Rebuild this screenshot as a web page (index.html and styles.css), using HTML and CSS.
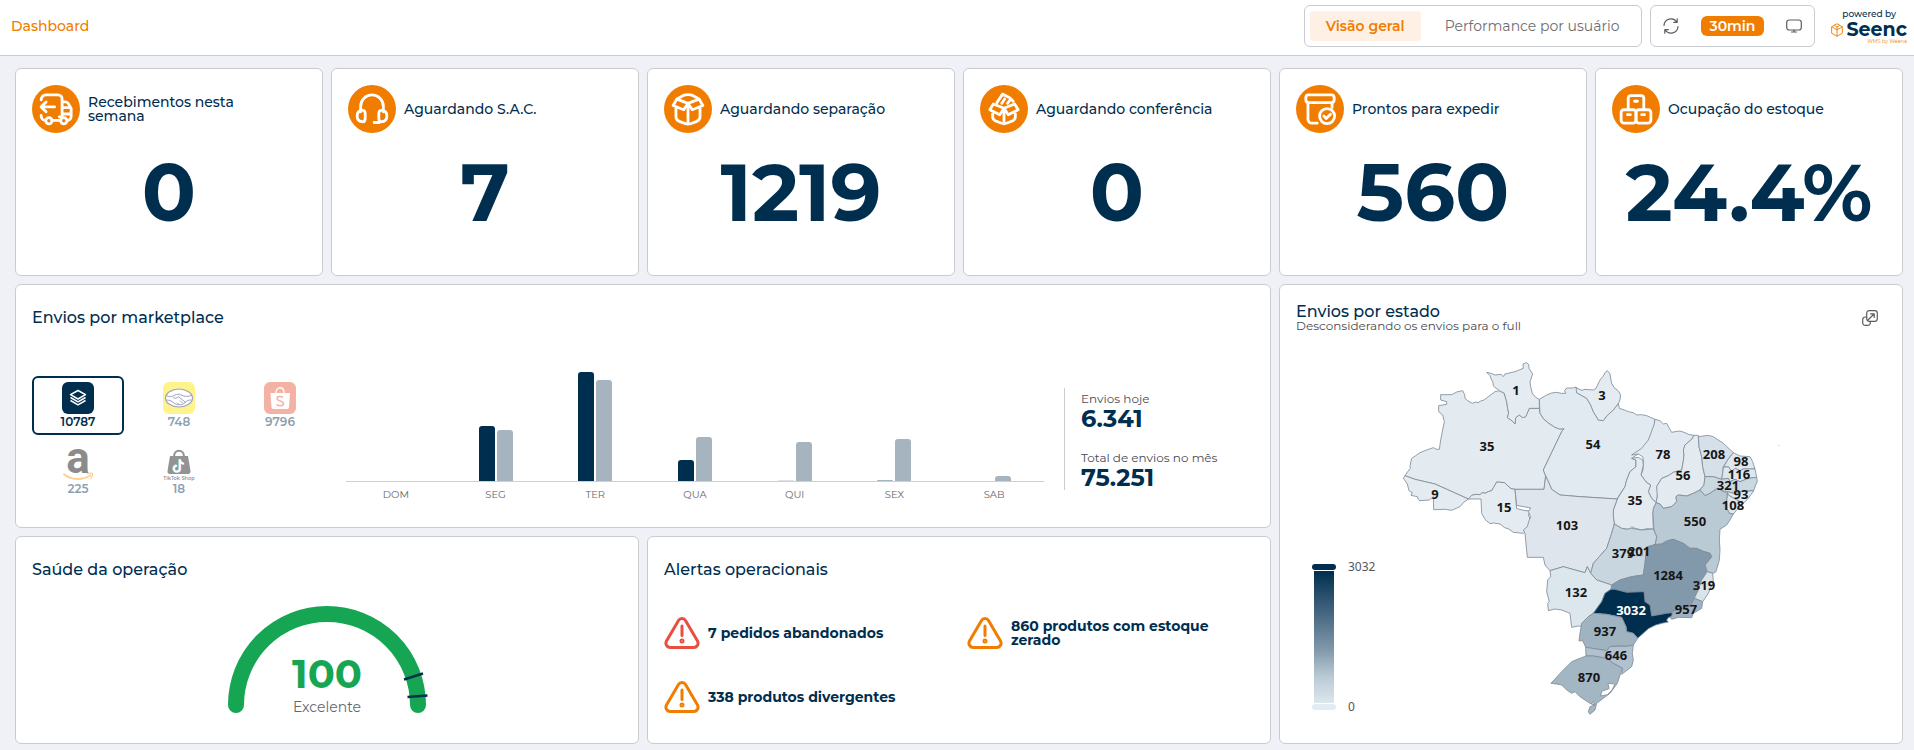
FILE: index.html
```html
<!DOCTYPE html>
<html lang="pt-BR">
<head>
<meta charset="utf-8">
<meta name="viewport" content="width=device-width, initial-scale=1">
<title>Dashboard</title>
<link rel="stylesheet" href="styles.css">
</head>
<body>
<header class="topbar">
  <h1 class="topbar-title">Dashboard</h1>
  <nav class="tabs" aria-label="Painéis">
    <button class="tab tab-active" type="button">Visão geral</button>
    <button class="tab" type="button">Performance por usuário</button>
  </nav>
  <div class="tools">
    <button class="icon-button" type="button" aria-label="Atualizar">
      <svg class="icon-16" viewBox="0 0 16 16"><path d="M1 7.500A7 7 0 0 1 13.800 4M15 8.500A7 7 0 0 1 2.200 12M14.200.8v3.500h-3.500M1.800 15.200v-3.500h3.500"/></svg>
    </button>
    <button class="interval" type="button">30min</button>
    <button class="icon-button" type="button" aria-label="Tela cheia">
      <svg class="icon-16" viewBox="0 0 16 16"><rect x=".7" y="2" width="14.600" height="10" rx="2.500"/><path d="M5.500 14h5M8 12v2"/></svg>
    </button>
  </div>
  <div class="brand">
    <span class="brand-top">powered by</span>
    <span class="brand-name">
      <svg class="brand-cube" viewBox="0 0 13 15"><path d="M6.500.7l5.800 3.300v7L6.500 14.300.7 11V4zM.7 4l5.800 3.200L12.300 4M6.500 7.200v7.100M3.500 2.400l3 1.800 3-1.800M6.500 4.200v3"/></svg>
      Seenc
    </span>
    <span class="brand-sub">WMS by Weena</span>
  </div>
</header>

<main class="board">
  <section class="card metric">
    <div class="metric-head">
      <span class="metric-icon"><svg viewBox="0 0 24 24"><path d="M1.500 5.500C1.800 3.300 3 2 5 2h8.300c1.700 0 3 1.300 3 3v12.500h-2M16.300 7h2.200c1 0 1.700.5 2.200 1.200l2 3.500V17c0 1.700-1 3-2.500 3M22.500 15.500H16.500M16.500 11h5.500M11 10.500H1.500M5 7L1.500 10.500 5 14M1.500 16.500c0 2 1.200 3.500 3 3.500M9 20h6"/><circle cx="7" cy="20.300" r="2.200"/><circle cx="17.500" cy="20.300" r="2.200"/></svg></span>
      <h2 class="metric-title">Recebimentos nesta semana</h2>
    </div>
    <p class="metric-value">0</p>
  </section>
  <section class="card metric">
    <div class="metric-head">
      <span class="metric-icon"><svg viewBox="0 0 24 24"><path d="M4 14v-4a8 8 0 0 1 16 0v4M5.500 13c1.400 0 1.700 1 1.700 2.500v3c0 1.500-.3 2.500-1.700 2.500-2.500 0-4-1.500-4-4s1.500-4 4-4zM18.500 13c-1.400 0-1.700 1-1.700 2.500v3c0 1.500.3 2.500 1.700 2.500 2.500 0 4-1.500 4-4s-1.500-4-4-4zM17 21.500h-3.500"/></svg></span>
      <h2 class="metric-title">Aguardando S.A.C.</h2>
    </div>
    <p class="metric-value">7</p>
  </section>
  <section class="card metric">
    <div class="metric-head">
      <span class="metric-icon"><svg viewBox="0 0 24 24"><path d="M12 8L4.200 5 1.500 9.500l7.500 3zM12 8l7.800-3 2.700 4.500-7.500 3zM4.200 5l4.500-2.600c2.200-.7 4.400-.7 6.600 0L19.800 5M3.500 11v6.500c0 1.500.8 2.500 2.200 3.200l4 1.500c1.500.6 3.100.6 4.600 0l4-1.500c1.400-.7 2.200-1.700 2.200-3.200V11M12 9v13.500"/></svg></span>
      <h2 class="metric-title">Aguardando separação</h2>
    </div>
    <p class="metric-value">1219</p>
  </section>
  <section class="card metric">
    <div class="metric-head">
      <span class="metric-icon"><svg viewBox="0 0 24 24"><path d="M12 11.500L4.500 8.500 2 12.500l7 3.500zM12 11.500l7.500-3 2.500 4L15 16zM4 15v2.500c0 1.400.6 2.200 1.800 2.800l4 1.600c1.500.6 2.900.6 4.400 0l4-1.600c1.200-.6 1.800-1.400 1.800-2.800V15M12 12v10.500M7 7.500l4-6 5 2.500 2.500 2.500M10.500 8l2-3M14.500 8L16 6"/></svg></span>
      <h2 class="metric-title">Aguardando conferência</h2>
    </div>
    <p class="metric-value">0</p>
  </section>
  <section class="card metric">
    <div class="metric-head">
      <span class="metric-icon"><svg viewBox="0 0 24 24"><path d="M4 2h16c1.200 0 2 .8 2 2v1.500c0 1.200-.8 2-2 2H4c-1.200 0-2-.8-2-2V4c0-1.200.8-2 2-2zM3.500 7.500V19c0 1.700 1.200 3 3 3H10M20.500 7.500V11"/><circle cx="17" cy="17" r="5.300"/><path d="M14.700 17l1.700 1.700 3-3"/></svg></span>
      <h2 class="metric-title">Prontos para expedir</h2>
    </div>
    <p class="metric-value">560</p>
  </section>
  <section class="card metric">
    <div class="metric-head">
      <span class="metric-icon"><svg viewBox="0 0 24 24"><rect x="1.500" y="12.500" width="10.500" height="9.500" rx="2"/><rect x="12" y="12.500" width="10.500" height="9.500" rx="2"/><path d="M6.500 12.500V4.500c0-1.200.8-2 2-2h7c1.200 0 2 .8 2 2v8M11 6.500h2M6 16h2M16 16h2"/></svg></span>
      <h2 class="metric-title">Ocupação do estoque</h2>
    </div>
    <p class="metric-value">24.4%</p>
  </section>

  <section class="card marketplace">
    <div class="card-head"><h2 class="card-title">Envios por marketplace</h2></div>
    <div class="marketplace-body">
      <div class="channels">
        <button class="channel channel-active" type="button" aria-label="Todos">
          <svg class="channel-logo" viewBox="0 0 32 32"><rect width="32" height="32" rx="6" fill="#002e4f"/><g fill="none" stroke="#fff" stroke-width="1.500" stroke-linejoin="round"><path d="M16 8.500l7.500 4.200L16 17l-7.500-4.300z"/><path d="M8.500 15.500L16 19.800l7.500-4.300M8.500 18.500l7.500 4.300 7.500-4.300"/></g></svg>
          <span>10787</span>
        </button>
        <button class="channel" type="button" aria-label="Mercado Livre">
          <svg class="channel-logo" viewBox="0 0 32 32"><rect width="32" height="32" rx="6" fill="#ffe600"/><ellipse cx="16" cy="16" rx="13.500" ry="9" fill="#fff" stroke="#2d3277" stroke-width="1.200"/><path d="M3 13.500c3 1.500 6 1.500 9-.5 2-1 4-1 6 0 4 1.800 7 1.800 11 .2M10 15.500c2 1.500 4 .3 5.500-.8l7.500 6M3.500 18c3 .3 4.500.5 6 2l3 2c2 1 6 1 8 0l2-2c2-1.500 3-2 6-2M14 20.500l2 2M17 18.500l3 3" fill="none" stroke="#2d3277"/></svg>
          <span>748</span>
        </button>
        <button class="channel" type="button" aria-label="Shopee">
          <svg class="channel-logo" viewBox="0 0 32 32"><rect width="32" height="32" rx="6" fill="#e8573a"/><path d="M6.500 11h19.500l-1 14c-.1 1.200-.8 2-2 2H9.500c-1.200 0-1.900-.8-2-2z" fill="#fff"/><path d="M12 11c0-7 8-7 8 0" fill="none" stroke="#fff" stroke-width="1.300"/><path d="M19 15.500c-2-1.500-6-1.500-6 1 0 3 6.500 2 6.500 5 0 2.800-4.500 3-7 .9" fill="none" stroke="#e8573a" stroke-width="1.500"/></svg>
          <span>9796</span>
        </button>
        <button class="channel" type="button" aria-label="Amazon">
          <svg class="channel-logo" viewBox="0 0 32 32"><text class="amazon-a" x="16" y="24" text-anchor="middle">a</text><path d="M1.500 25c8 6.500 19 6.500 27.500 1" fill="none" stroke="#f90" stroke-width="1.800"/><path d="M25 25c2-1 4.500-1 5.500-.5.300 1.500-.5 4-2 5.500" fill="none" stroke="#f90" stroke-width="1.300"/></svg>
          <span>225</span>
        </button>
        <button class="channel" type="button" aria-label="TikTok Shop">
          <svg class="channel-logo" viewBox="0 0 32 32"><path d="M7 7h18l2.500 15c.2 1.800-.7 3-2.500 3H7c-1.800 0-2.700-1.200-2.500-3z" fill="#111"/><path d="M11 8c0-8.500 10-8.500 10 0" fill="none" stroke="#111" stroke-width="2"/><path d="M16.500 10v9.500a3 3 0 1 1-3-3M16.500 11c.5 2 2 3.300 4 3.500" fill="none" stroke="#25f4ee" stroke-width="2.400"/><path d="M17.500 10.500V20a3 3 0 1 1-3-3M17.500 11.500c.5 2 2 3.300 4 3.500" fill="none" stroke="#fe2c55" stroke-width="1.600"/><path d="M17 10.200v9.600a3 3 0 1 1-3-3M17 11.200c.5 2 2 3.300 4 3.500" fill="none" stroke="#fff" stroke-width="1.600"/><text class="tiktok-word" x="16" y="31" text-anchor="middle">TikTok Shop</text></svg>
          <span>18</span>
        </button>
      </div>

      <div class="chart" role="img" aria-label="Envios por dia da semana">
        <div class="plot">
          <div class="day"></div>
          <div class="day"><i class="bar" style="height:55px"></i><i class="bar bar-prev" style="height:51px"></i></div>
          <div class="day"><i class="bar" style="height:109px"></i><i class="bar bar-prev" style="height:101px"></i></div>
          <div class="day"><i class="bar" style="height:21px"></i><i class="bar bar-prev" style="height:44px"></i></div>
          <div class="day"><i class="bar bar-faint" style="height:1px"></i><i class="bar bar-prev" style="height:39px"></i></div>
          <div class="day"><i class="bar bar-prev" style="height:1px"></i><i class="bar bar-prev" style="height:42px"></i></div>
          <div class="day"><i class="bar" style="height:0"></i><i class="bar bar-prev" style="height:5px"></i></div>
        </div>
        <div class="days"><span>DOM</span><span>SEG</span><span>TER</span><span>QUA</span><span>QUI</span><span>SEX</span><span>SAB</span></div>
      </div>

      <dl class="totals">
        <div><dt>Envios hoje</dt><dd>6.341</dd></div>
        <div><dt>Total de envios no mês</dt><dd>75.251</dd></div>
      </dl>
    </div>
  </section>

  <section class="card states">
    <div class="card-head">
      <div>
        <h2 class="card-title">Envios por estado</h2>
        <p class="card-note">Desconsiderando os envios para o full</p>
      </div>
      <button class="icon-button" type="button" aria-label="Expandir">
        <svg class="icon-16" viewBox="0 0 16 16"><rect x="4.700" y=".7" width="10.600" height="10.600" rx="2.500"/><path d="M4.700 7H3.200A2.500 2.500 0 0 0 .7 9.500v3.300a2.500 2.500 0 0 0 2.500 2.500h2.600a2.500 2.500 0 0 0 2.500-2.500v-1.500M5.500 10.500L12 4M8.500 3.800H12.200V7.500"/></svg>
      </button>
    </div>
    <div class="states-body">
      <div class="scale">
        <div class="scale-strip"><i class="scale-cap scale-cap-high"></i><i class="scale-bar"></i><i class="scale-cap scale-cap-low"></i></div>
        <div class="scale-labels"><span>3032</span><span>0</span></div>
      </div>
      <svg class="map" viewBox="0 0 420 370" role="img" aria-label="Mapa do Brasil com envios por estado">
        <g class="map-shapes" transform="scale(.33333)">
          <path fill="#e3ebf1" d="M75 377l8-12 8-10-1-8 5-22 12-8 13-9 20-8 20-7 10 5 8 0 4-28 6-30 5-25-5-20-12-10 0-18 12-2 12-2 0-8-18-5 0-16 33 0 15-8 18-4 6 12 1 11 8 7 14 8 10-4 8 2 7-5 8-2 10-7L345 125 358 122 373 130 375 138 380 155 383 175 386 190 382 203 396 212 405 222 407 203 418 195 428 203 437 200 448 175H478L480 190 492 208 507 220 525 232 539 237 552 236 545 245 490 360 497 378 492 418H405L393 416 373 398 350 396 341 412 335 422 325 425 315 430 307 428 300 434 288 433 275 436 265 447 165 402 105 388z"/>
          <path fill="#e4ecf2" d="M75 377l-5 8 12 17 5 20 10 6-4 8 19 4 3 9 5 3 28-2 12-10 1 39 35-1 19 3 14-6 11-5 10-12 15-11L165 402 105 388z"/>
          <path fill="#e4ecf2" d="M265 447h38l2 43 10 18 15 13 10-2 20 3 14 11 12 4 14 10 30 3 12-10 4-15 6-15-7-15 7-11-20-3-22-5-5-58L393 416 373 398 350 396 341 412 335 422 325 425 315 430 307 428 300 434 288 433 275 436z"/>
          <path fill="#e4ecf2" d="M358 122l-18-14-1-10-6-13-3-8-10-10 10 2 15 6 18-2 7 7 5-8 30-7 15-6 10-4-1-13 10-4 7 5 1 12 11 17-4 12-4 11 2 15 5 20 10 12L478 148V175H448L437 200 428 203 418 195 407 203 405 222 396 212 382 203 386 190 383 175 380 155 375 138 373 130z"/>
          <path fill="#e2eaf1" d="M478 148l22-13 15-6 15-2 14 3 13 0-3-8 6-8 18 0 10-3 5 6-3 11 30 17 12 20 8 20 15 25 15 2 10-14 20-18 15-20 3 15 15 5 12 5 15 3 10 7 15-1 15 3 25 11-3 27-17 45-20 25-30 20 13 5v20l-18 15-10 25-5 20-20 30-3 7L600 440 540 435 515 418 505 395 497 378 490 360 545 245 552 236 539 237 525 232 507 220 492 208 480 190z"/>
          <path fill="#e4ecf2" d="M588 113l17 8 10-3 25 2 8-5 12-25 10-12 6-11 6-5 8 10 2 12 3 16 7 12 13 11 7 12-2 15-5 10-15 20-20 18-10 14-15-2-15-25-8-20-12-20-30-17z"/>
          <path fill="#e2e9f0" d="M825 208l15 4 10 10 10-2 8 15 7 12 10-2 15-2 15 5 10 5 17 3-7 12-20 17-5 15 2 15-2 18-5 27-25 7-15 10-20 8-15 25 3 15-3 33-15-13-10-20 7-20-12-7-17-23 6-15 1-30-2-10-13-8-20 3 30-20 20-25 17-45z"/>
          <path fill="#e3ebf1" d="M942 256h13l2 34 8 30 3 30 7 30-3 25-12 15-20 10-20 8-25-3-7 5 2 15-15 15-25 5-10-13-12-4 4-18-2-30 15-25 20-8 15-10 25-7 5-27 2-18-2-15 5-15 20-17z"/>
          <path fill="#d5e0e8" d="M955 260l30-4 15 4 30 20 30 28-10 12-20 30-2 20-3 18-10-3-15-5-25 0-7-30-3-30-8-30z"/>
          <path fill="#e0e8ef" d="M1060 308l20 10 30 2 8 15 7 22-35 0-10 5-15-7-10 10-10-15-15 2 15-25z"/>
          <path fill="#dfe7ee" d="M1030 352l15-2 10 15 10-10 15 7 10-5h35l5 25-25 3-25 10-15-7-15 7-5-10-20 3 3-18z"/>
          <path fill="#cad8e0" d="M975 380h25l15 5 10 3 20-3 5 10 15-7 15 7 25-10 25-3 2 13-5 10-6 17-36 3-25 5-18-5-17-3-13-7-22 15-15 7-15-17 12-15z"/>
          <path fill="#e0e8ef" d="M1042 425l18 5 25-5 36-3-16 23-15 15-20-10-25-15z"/>
          <path fill="#dfe7ee" d="M1042 430l3 5 25 15 20 10-20 20-10 12-12-2-8-15v-25z"/>
          <path fill="#b9cad4" d="M960 420l15 17 15-7 22-15 13 7 17 8-2 20v25l8 15 12 2-10 18-10 15-20 13-2 32 2 30-2 30-10 35-8 5-18-5-7-20 20-25-5-10-20-6-20-9-20 0-20-15-30-12-10 2-25 12-20 3 5-25-8-20-2-30-2-20 2-15 8-17 12 4 10 13 25-5 15-15-2-15 7-5 25 3 20-8z"/>
          <path fill="#e3ebf1" d="M755 325l20-3 13 8 2 15-7 30 17 23 12 7-7 20 10 20 13 13-8 17-2 15 2 47-20-1-15 4-20-5-10-5-7 8-23-3-22-13-3-22 0-20 12-33 23-37 5-20 10-25 18-15v-20z"/>
          <path fill="#dee5ed" d="M405 418H492L497 378 505 395 515 418 540 435 600 440 712 447l-12 33 0 20 3 22-8 28-15 45-40 45-8 30-10-20-7 18-30-8-35-10-40 12-15-17-5-23h-48l-7-72-5-10 12-10 4-15 6-15-7-15 7-11-42-8z"/>
          <path fill="#c8d6df" d="M703 522l22 13 15 3 15-3 30 5 35-3 10 23-5 25-25 5-5 50-5 35-35 5-35 10-25 15-45-15-18-20 8-30 40-45 15-45z"/>
          <path fill="#d3dee6" d="M757 599h30v18h-30z"/>
          <path fill="#8299ac" d="M800 592l25-9 20-1 12-8 13-4 10-2 30 12 20 15h20l20 9 20 6 5 10-10 13-10 12 5 20-15 25-10 30-12 25-13 25-40 10-30 10-45 8-5-33-15-10-3-30-52 2-35-9h-12l2-13 25-15 35-10 35-5 5-35z"/>
          <path fill="#d9e3ea" d="M982 665l16 5 2 25-15 35-17 25-25-10 12-25 10-30z"/>
          <path fill="#9db1c0" d="M943 745l25 10-3 20-25 15-5 13-40-1-20 6-15-18 30-10 40-10z"/>
          <path fill="#dce6ed" d="M510 662l40-12 35 10 30 8 7-18 10 20 18 20 45 15-2 13-18 12-10 25-25 35-15 10-15 30-15-2-20 4-5-42-25-10-20-3-20 5-2-22 5-5-8-30 3-35 9-10z"/>
          <path fill="#002e4f" d="M693 718h12l35 9 52-2 3 30 15 10 5 33 45-8 17-2-2 10-10 5-5 8 5 5-20 4-20 6-20 10-32 29-13-15-20-5-2-15-13-28-45-9-40-3 25-35 10-25z"/>
          <path fill="#9fb3c1" d="M640 790l40 3 45 9 13 28 2 15 20 5 13 15-13 20-20 4-20-2-30 2-10 13-30-5-33-5-9-20-11 1 3-23 5-30 20-20z"/>
          <path fill="#b1c2ce" d="M617 892l33 5 30 5 10-12 30-1 20 0 20-4-3 25 3 20-5 20-30 23 3-18-28-15-20-15-40-7h-22z"/>
          <path fill="#a3b6c4" d="M618 918h22l40 7 20 15 28 15-6 15-10 30-22 30-20 15-20 15-5 20-15 13-5-8 5-15 15-5-15-5-30-20-15-15-10 5-15-10-15-15-15-3-17-2 32-35 30-30 25-10z"/>
          <path fill="#fff" d="M662 1038l3-14 22-8-3-16 21 2-9 18-14 14zM634 1062l6-8 4 8z"/>
          <path fill="#e3ebf1" d="M1195 285l2 2"/>
        </g>
        <g class="map-labels">
          <text x="136" y="45">1</text><text x="107" y="101">35</text><text x="55" y="149">9</text><text x="124" y="162">15</text><text x="187" y="180">103</text><text x="213" y="99">54</text><text x="222" y="50">3</text><text x="283" y="109">78</text><text x="303" y="130">56</text><text x="255" y="155">35</text><text x="334" y="109">208</text><text x="361" y="116">98</text><text x="359" y="129">116</text><text x="348" y="140">321</text><text x="361" y="149">93</text><text x="353" y="160">108</text><text x="315" y="176">550</text><text x="243" y="208">379</text><text x="259" y="206">201</text><text x="288" y="230">1284</text><text x="324" y="240">319</text><text x="306" y="264">957</text><text class="on-dark" x="251" y="265">3032</text><text x="196" y="247">132</text><text x="225" y="286">937</text><text x="236" y="310">646</text><text x="209" y="332">870</text>
        </g>
      </svg>
    </div>
  </section>

  <section class="card health">
    <div class="card-head"><h2 class="card-title">Saúde da operação</h2></div>
    <div class="health-body">
      <svg class="gauge" viewBox="0 0 204 116" role="img" aria-label="Saúde da operação: 100, Excelente">
        <path d="M11 101a91 91 0 0 1 182 0" fill="none" stroke="#16a653" stroke-width="16" stroke-linecap="round"/>
        <path d="M179 75.500l19-6M182.500 93l20-1.500" stroke="#002e4f" stroke-width="2.500"/>
        <text class="gauge-value" x="102" y="84">100</text>
        <text class="gauge-label" x="102" y="108">Excelente</text>
      </svg>
    </div>
  </section>

  <section class="card alerts">
    <div class="card-head"><h2 class="card-title">Alertas operacionais</h2></div>
    <ul class="alert-list">
      <li class="alert alert-danger">
        <svg class="alert-icon" viewBox="0 0 36 32"><path d="M14.500 3.500c1.500-2.600 5.500-2.600 7 0l12 20.500c1.500 2.800-.3 6.500-3.700 6.500H6.200c-3.400 0-5.200-3.700-3.700-6.500zM18 9v9.500"/><circle cx="18" cy="24" r="1"/></svg>
        <span>7 pedidos abandonados</span>
      </li>
      <li class="alert">
        <svg class="alert-icon" viewBox="0 0 36 32"><path d="M14.500 3.500c1.500-2.600 5.500-2.600 7 0l12 20.500c1.500 2.800-.3 6.500-3.700 6.500H6.200c-3.400 0-5.200-3.700-3.700-6.500zM18 9v9.500"/><circle cx="18" cy="24" r="1"/></svg>
        <span>860 produtos com estoque zerado</span>
      </li>
      <li class="alert">
        <svg class="alert-icon" viewBox="0 0 36 32"><path d="M14.500 3.500c1.500-2.600 5.500-2.600 7 0l12 20.500c1.500 2.800-.3 6.500-3.700 6.500H6.200c-3.400 0-5.200-3.700-3.700-6.500zM18 9v9.500"/><circle cx="18" cy="24" r="1"/></svg>
        <span>338 produtos divergentes</span>
      </li>
    </ul>
  </section>
</main>
</body>
</html>
```
FILE: styles.css
```css
:root {
  --navy: #002e4f;
  --orange: #f07d00;
  --line: #cacbd1;
  --muted: #66666a;
}

* { box-sizing: border-box; }

body {
  margin: 0;
  min-height: 100vh;
  display: flex;
  flex-direction: column;
  background: #f0f1f7;
  color: var(--navy);
  font-family: Montserrat, Inter, sans-serif;
}

h1, h2, p, dl, dd, ul { margin: 0; padding: 0; }
ul { list-style: none; }
button {
  margin: 0;
  padding: 0;
  border: 0;
  background: none;
  color: inherit;
  font: inherit;
  cursor: pointer;
}

/* Top bar */
.topbar {
  display: flex;
  align-items: center;
  gap: 8px;
  min-height: 56px;
  padding: 0 7px 3px 11px;
  background: #fff;
  border-bottom: 1px solid var(--line);
}
.topbar-title {
  flex: 1;
  color: var(--orange);
  font-size: 14px;
  font-weight: 500;
}
.tabs, .tools {
  display: flex;
  align-items: center;
  height: 42px;
  border: 1px solid var(--line);
  border-radius: 6px;
}
.tabs { gap: 8px; padding: 0 5px; }
.tab {
  height: 30px;
  padding: 0 16px;
  border-radius: 4px;
  color: #6e6e72;
  font-size: 14px;
  font-weight: 400;
}
.tab-active {
  background: #fef0e4;
  color: var(--orange);
  font-weight: 600;
}
.tools { gap: 14px; padding: 0 4px; }
.icon-button {
  display: grid;
  place-items: center;
  width: 32px;
  height: 32px;
  color: #5d5d62;
}
.icon-16 {
  width: 16px;
  height: 16px;
  fill: none;
  stroke: currentColor;
  stroke-width: 1.2;
  stroke-linecap: round;
  stroke-linejoin: round;
}
.interval {
  height: 20px;
  padding: 0 9px;
  border-radius: 6px;
  background: var(--orange);
  color: #fff;
  font-size: 14px;
  font-weight: 600;
}
.brand {
  display: flex;
  flex-direction: column;
  align-items: flex-end;
  margin-left: 8px;
}
.brand-top {
  align-self: center;
  font-size: 9px;
  font-weight: 500;
  line-height: 12px;
}
.brand-name {
  display: flex;
  align-items: center;
  gap: 3px;
  font-size: 19px;
  font-weight: 700;
  line-height: 19px;
}
.brand-cube {
  width: 12px;
  height: 14px;
  fill: none;
  stroke: var(--orange);
}
.brand-sub {
  color: var(--orange);
  font-size: 5px;
  line-height: 5px;
}

/* Board */
.board {
  flex: 1;
  display: grid;
  grid-template-columns: repeat(12, minmax(0, 1fr));
  grid-template-rows: minmax(208px, 1fr) minmax(244px, auto) minmax(208px, 1fr);
  gap: 8px;
  padding: 12px 11px 6px 15px;
}
.card {
  display: flex;
  flex-direction: column;
  padding: 16px;
  border: 1px solid var(--line);
  border-radius: 6px;
  background: #fff;
}
.card-head {
  display: flex;
  align-items: center;
  justify-content: space-between;
  height: 32px;
  padding-top: 2px;
}
.card-title {
  font-size: 16px;
  font-weight: 500;
  line-height: 16px;
}
.card-note {
  color: #4b4b52;
  font-size: 12px;
  line-height: 12px;
}

/* Metrics */
.metric { grid-column: span 2; }
.metric-head {
  display: flex;
  align-items: center;
  gap: 8px;
}
.metric-icon {
  flex: none;
  display: grid;
  place-items: center;
  width: 48px;
  height: 48px;
  border-radius: 50%;
  background: var(--orange);
}
.metric-icon svg {
  width: 34px;
  height: 34px;
  fill: none;
  stroke: #fff;
  stroke-width: 2;
  stroke-linecap: round;
  stroke-linejoin: round;
}
.metric-title {
  max-width: 192px;
  font-size: 14px;
  font-weight: 500;
  line-height: 14px;
}
.metric-value {
  flex: 1;
  display: grid;
  place-items: center;
  padding-bottom: 6px;
  font-size: 80px;
  font-weight: 700;
  line-height: 80px;
}

/* Marketplace */
.marketplace { grid-column: span 8; }
.marketplace-body {
  flex: 1;
  display: flex;
  align-items: center;
  gap: 20px;
  padding-top: 34px;
}
.channels {
  flex: none;
  display: grid;
  grid-template-columns: repeat(3, 92px);
  gap: 8px 9px;
}
.channel {
  display: flex;
  flex-direction: column;
  align-items: center;
  gap: 1px;
  padding: 4px 0;
  border: 2px solid transparent;
  border-radius: 6px;
  font-size: 12px;
  font-weight: 600;
  line-height: 14px;
  opacity: .45;
}
.channel-active { border-color: var(--navy); opacity: 1; }
.channel-logo { width: 32px; height: 32px; overflow: visible; }
.amazon-a { font-family: Roboto, sans-serif; font-size: 44px; font-weight: 700; }
.tiktok-word { font-size: 5px; }

.chart { flex: 1; }
.plot, .days { display: grid; grid-template-columns: repeat(7, 1fr); }
.plot { height: 111px; border-bottom: 1px solid #cfd0d3; }
.day {
  display: flex;
  align-items: flex-end;
  justify-content: center;
  gap: 2px;
}
.bar {
  width: 16px;
  border-radius: 3px 3px 0 0;
  background: var(--navy);
}
.bar-prev { background: #a6b4c0; }
.bar-faint { background: #dbe1e6; }
.days {
  padding: 6px 0 5px;
  color: var(--muted);
  font-size: 10px;
  line-height: 14px;
  text-align: center;
}
.totals {
  display: grid;
  gap: 20px;
  width: 190px;
  padding: 4px 0 0 16px;
  border-left: 1px solid var(--line);
}
.totals dt { color: #4b4b52; font-size: 12px; line-height: 14px; }
.totals dd { font-size: 24px; font-weight: 700; line-height: 25px; }

/* States */
.states { grid-column: span 4; grid-row: span 2; }
.states-body {
  flex: 1;
  display: flex;
  align-items: flex-end;
}
.scale {
  flex: none;
  display: flex;
  gap: 12px;
  width: 84px;
  padding: 0 0 17px 16px;
  font-family: "Noto Sans", sans-serif;
}
.scale-strip {
  display: flex;
  flex-direction: column;
  align-items: center;
  gap: 1px;
}
.scale-cap { width: 24px; height: 6px; border-radius: 3px; }
.scale-cap-high { background: var(--navy); }
.scale-cap-low { background: #e3ecf2; }
.scale-bar {
  width: 20px;
  height: 132px;
  background: linear-gradient(#002e4f, #8299ac 60%, #b9cad4 80%, #dce6ed);
}
.scale-labels {
  display: flex;
  flex-direction: column;
  justify-content: space-between;
  color: #55555c;
  font-size: 12px;
  line-height: 6px;
}
.map {
  flex: 0 1 420px;
  min-width: 0;
  margin-bottom: 7px;
}
.map-shapes { stroke: #7f8c98; stroke-width: 2.5; stroke-linejoin: round; }
.map-labels {
  fill: #161616;
  font-family: "Noto Sans", sans-serif;
  font-size: 13px;
  font-weight: 700;
  text-anchor: middle;
}
.map-labels .on-dark { fill: #fff; }

/* Health */
.health { grid-column: span 4; }
.health-body {
  flex: 1;
  display: grid;
  place-items: center;
  padding-top: 12px;
}
.gauge { width: 204px; height: 116px; }
.gauge text { text-anchor: middle; }
.gauge-value { fill: #16a653; font-size: 40px; font-weight: 700; }
.gauge-label { fill: var(--muted); font-size: 14px; }

/* Alerts */
.alerts { grid-column: span 4; }
.alert-list {
  flex: 1;
  display: grid;
  grid-template-columns: 1fr 1fr;
  grid-auto-rows: 40px;
  align-content: center;
  gap: 24px 16px;
  padding-top: 18px;
}
.alert {
  display: flex;
  align-items: center;
  gap: 8px;
  color: var(--orange);
  font-size: 14px;
  font-weight: 700;
  line-height: 14px;
}
.alert-danger { color: #e94e40; }
.alert span { max-width: 220px; color: var(--navy); }
.alert-icon {
  flex: none;
  width: 36px;
  height: 32px;
  fill: none;
  stroke: currentColor;
  stroke-width: 3;
  stroke-linecap: round;
}
```
